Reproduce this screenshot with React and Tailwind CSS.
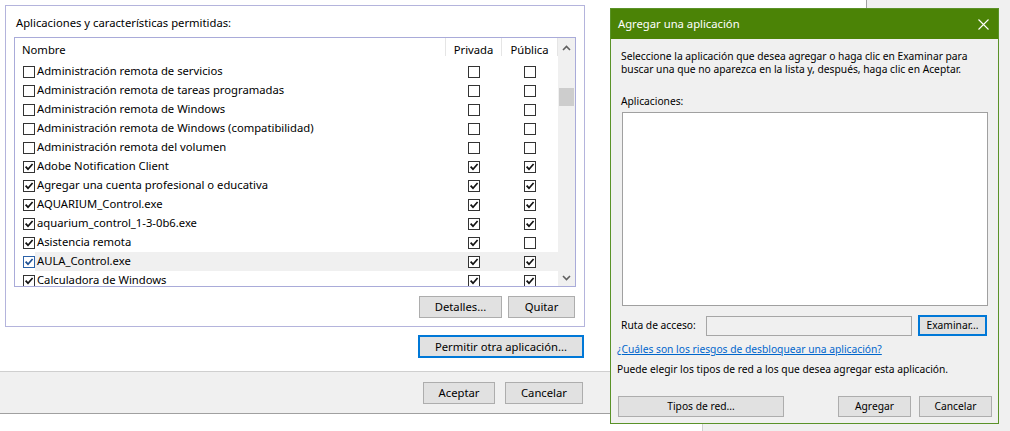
const apps = [
  ['Administración remota de servicios', false, false, false],
  ['Administración remota de tareas programadas', false, false, false],
  ['Administración remota de Windows', false, false, false],
  ['Administración remota de Windows (compatibilidad)', false, false, false],
  ['Administración remota del volumen', false, false, false],
  ['Adobe Notification Client', true, true, true],
  ['Agregar una cuenta profesional o educativa', true, true, true],
  ['AQUARIUM_Control.exe', true, true, true],
  ['aquarium_control_1-3-0b6.exe', true, true, true],
  ['Asistencia remota', true, true, false],
  ['AULA_Control.exe', true, true, true],
  ['Calculadora de Windows', true, true, true],
]

function Check({ checked, accent }) {
  return (
    <span
      className={`flex h-[12px] w-[12px] shrink-0 items-center justify-center border bg-white ${
        accent ? 'border-[#2c62a8]' : 'border-[#333333]'
      }`}
    >
      {checked && (
        <svg width="10" height="10" viewBox="0 0 10 10">
          <path d="M1.6 4.6 L4 7.2 L8.6 2" fill="none" stroke={accent ? '#1d4f91' : '#111111'} strokeWidth="1.7" />
        </svg>
      )}
    </span>
  )
}

function WinButton({ children, className = '', focused }) {
  return (
    <button
      type="button"
      className={`flex items-center justify-center bg-[#e1e1e1] leading-none text-black ${
        focused ? 'border-2 border-[#0078d7]' : 'border border-[#adadad]'
      } ${className}`}
    >
      {children}
    </button>
  )
}

function Chevron({ up }) {
  return (
    <svg width="9" height="6" viewBox="0 0 9 6">
      <path d={up ? 'M1 5 L4.5 1.5 L8 5' : 'M1 1 L4.5 4.5 L8 1'} fill="none" stroke="#606060" strokeWidth="1.6" />
    </svg>
  )
}

function AppList() {
  return (
    <div className="ml-[8px] mt-[6px] flex h-[250px] w-[562px] border border-[#a9abd9] bg-white">
      <div className="flex w-[543px] flex-col overflow-hidden">
        <div className="flex h-[24px] shrink-0">
          <div className="flex w-[431px] items-center justify-between">
            <span className="pl-[7px]">Nombre</span>
            <span className="h-[18px] w-px self-start bg-[#e5e5e5]" />
          </div>
          <div className="flex w-[56px] items-center justify-between">
            <span className="flex-1 text-center">Privada</span>
            <span className="h-[18px] w-px self-start bg-[#e5e5e5]" />
          </div>
          <div className="flex w-[56px] items-center justify-between">
            <span className="flex-1 text-center">Pública</span>
            <span className="h-[18px] w-px self-start bg-[#e5e5e5]" />
          </div>
        </div>
        {apps.map(([name, on, priv, pub]) => {
          const hot = name === 'AULA_Control.exe'
          return (
            <div key={name} className="flex h-[19px] shrink-0">
              <div className="flex w-[431px] items-center pl-[8px]">
                <Check checked={on} accent={hot} />
                <span className={`flex h-full flex-1 items-center whitespace-nowrap pl-[2px] ${hot ? 'bg-[#f0f0f0]' : ''}`}>
                  {name}
                </span>
              </div>
              <div className={`flex w-[56px] items-center justify-center ${hot ? 'bg-[#f0f0f0]' : ''}`}>
                <Check checked={priv} />
              </div>
              <div className={`flex w-[56px] items-center justify-center ${hot ? 'bg-[#f0f0f0]' : ''}`}>
                <Check checked={pub} />
              </div>
            </div>
          )
        })}
      </div>
      <div className="flex w-[17px] flex-col bg-[#f0f0f0]">
        <div className="flex h-[17px] items-center justify-center pt-[2px]">
          <Chevron up />
        </div>
        <div className="flex-1">
          <div className="ml-[1px] mt-[33px] h-[18px] w-[15px] bg-[#cdcdcd]" />
        </div>
        <div className="flex h-[17px] items-center justify-center">
          <Chevron />
        </div>
      </div>
    </div>
  )
}

function AddAppDialog() {
  return (
    <div className="absolute left-[610px] top-[8px] flex w-[389px] flex-col border border-[#5a9228] bg-[#f0f0f0] pb-[6px]">
      <div className="flex h-[30px] items-center justify-between bg-[#4b8306] pl-[7px] pr-[9px] text-white">
        <span>Agregar una aplicación</span>
        <svg width="11" height="11" viewBox="0 0 11 11">
          <path d="M0.5 0.5 L10.5 10.5 M10.5 0.5 L0.5 10.5" stroke="#ffffff" strokeWidth="1.1" />
        </svg>
      </div>
      <div className="flex flex-col text-[10.25px]">
        <p className="mt-[11px] whitespace-nowrap pl-[10px] leading-[13px]">
          Seleccione la aplicación que desea agregar o haga clic en Examinar para
          <br />
          buscar una que no aparezca en la lista y, después, haga clic en Aceptar.
        </p>
        <p className="mt-[17px] pl-[10px] leading-[16px]">Aplicaciones:</p>
        <div className="ml-[11px] mt-[3px] h-[194px] w-[366px] border border-[#a0a0a0] bg-white" />
        <div className="mt-[9px] flex h-[21px] items-center pl-[10px]">
          <span className="w-[85px]">Ruta de acceso:</span>
          <div className="h-[20px] w-[206px] border border-[#a6a6a6] bg-[#f0f0f0]" />
          <WinButton focused className="ml-[6px] h-[21px] w-[69px]">
            Examinar...
          </WinButton>
        </div>
        <a href="#" className="mt-[5px] self-start pl-[6px] leading-[16px] text-[#0066cc] underline">
          ¿Cuáles son los riesgos de desbloquear una aplicación?
        </a>
        <p className="mt-[4px] whitespace-nowrap pl-[6px] leading-[16px]">
          Puede elegir los tipos de red a los que desea agregar esta aplicación.
        </p>
        <div className="mt-[19px] flex pl-[7px] pr-[6px]">
          <WinButton className="h-[21px] w-[166px]">Tipos de red...</WinButton>
          <div className="flex-1" />
          <WinButton className="h-[21px] w-[73px]">Agregar</WinButton>
          <WinButton className="ml-[8px] h-[21px] w-[73px]">Cancelar</WinButton>
        </div>
      </div>
    </div>
  )
}

export default function App() {
  return (
    <div className="relative h-[431px] w-[1010px] overflow-hidden bg-white font-['Noto_Sans','Liberation_Sans',sans-serif] text-[11.25px] text-black">
      <div className="absolute left-[866px] top-0 h-full w-[144px] border-l border-[#a0a0a0] bg-[#f0f0f0]" />
      <div className="absolute left-[702px] top-[414px] h-[17px] w-[308px] border-l border-[#d0d0d0] bg-[#f0f0f0]" />

      <div className="absolute left-0 top-0 flex w-[866px] flex-col">
        <div className="ml-[5px] mt-[5px] flex h-[322px] w-[580px] flex-col border border-[#b4b4dc]">
          <p className="pl-[10px] pt-[9px] leading-[16px]">Aplicaciones y características permitidas:</p>
          <AppList />
          <div className="ml-[8px] mt-[9px] flex w-[562px] justify-end gap-[6px] pr-[1px]">
            <WinButton className="h-[22px] w-[83px]">Detalles...</WinButton>
            <WinButton className="h-[22px] w-[67px]">Quitar</WinButton>
          </div>
        </div>
        <WinButton focused className="ml-[418px] mt-[8px] h-[23px] w-[166px]">
          Permitir otra aplicación...
        </WinButton>
        <div className="mt-[13px] flex h-[43px] border-b border-t border-b-[#a0a0a0] border-t-[#cfcfcf] bg-[#f0f0f0] pl-[423px] pt-[10px]">
          <WinButton className="h-[22px] w-[72px]">Aceptar</WinButton>
          <WinButton className="ml-[10px] h-[22px] w-[78px]">Cancelar</WinButton>
        </div>
      </div>

      <AddAppDialog />
    </div>
  )
}
